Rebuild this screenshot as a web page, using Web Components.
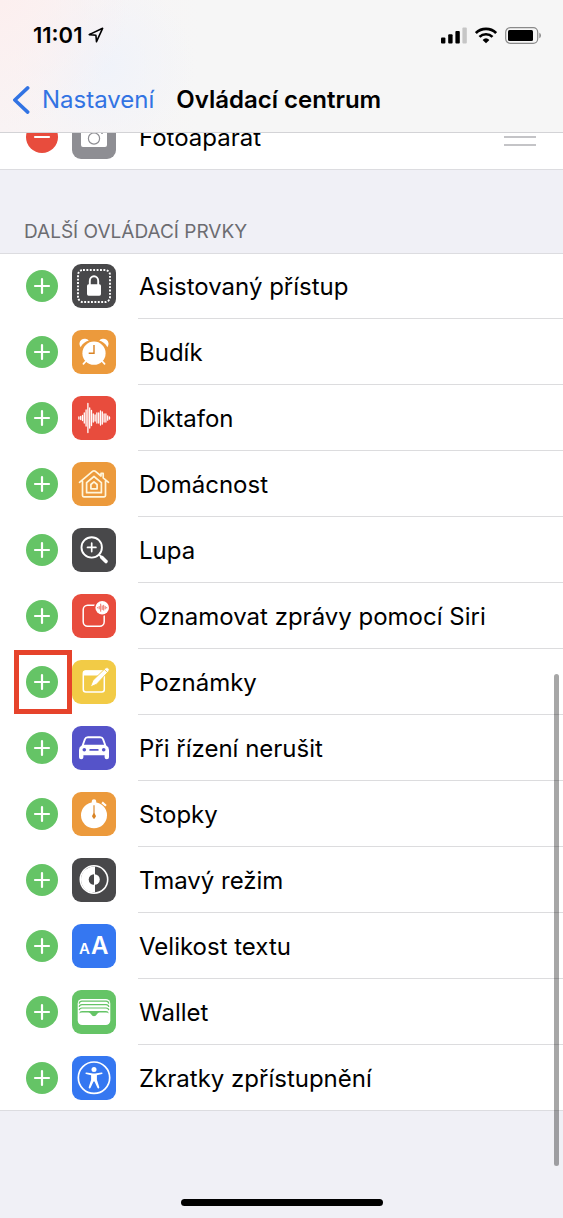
<!DOCTYPE html>
<html lang="cs">
<head>
<meta charset="utf-8">
<meta name="viewport" content="width=device-width, initial-scale=1">
<title>Ovládací centrum</title>
<style>
html { background: #f0f0f6; }
body { margin: 0; font-family: Inter, "Liberation Sans", sans-serif; color: #000; }
</style>
</head>
<body>
<settings-page>
  <nav-header slot="header" heading="Ovládací centrum" back="Nastavení"></nav-header>
  <control-list>
    <control-row action="remove" icon="camera">Fotoaparát</control-row>
  </control-list>
  <control-list heading="Další ovládací prvky">
    <control-row icon="lock">Asistovaný přístup</control-row>
    <control-row icon="alarm">Budík</control-row>
    <control-row icon="wave">Diktafon</control-row>
    <control-row icon="home">Domácnost</control-row>
    <control-row icon="magnifier">Lupa</control-row>
    <control-row icon="announce">Oznamovat zprávy pomocí Siri</control-row>
    <control-row icon="notes" marked>Poznámky</control-row>
    <control-row icon="car">Při řízení nerušit</control-row>
    <control-row icon="stopwatch">Stopky</control-row>
    <control-row icon="dark">Tmavý režim</control-row>
    <control-row icon="textsize">Velikost textu</control-row>
    <control-row icon="wallet">Wallet</control-row>
    <control-row icon="access">Zkratky zpřístupnění</control-row>
  </control-list>
</settings-page>

<script>
const bars = (list, step, x0, cy) => list.map((h, i) => `M${x0 + i * step} ${cy - h}V${cy + h}`).join('');

const ICONS = {
  camera: ['#8e8e93', `<path d="M9 14q0-2 2-2h5l2-3h8l2 3h5q2 0 2 2v16q0 2-2 2H11q-2 0-2-2z" fill="#fff"/><circle cx="22" cy="23.5" r="5.6" fill="none" stroke="#8e8e93" stroke-width="1.2"/><circle cx="30" cy="18" r="1" fill="#8e8e93"/>`],
  lock: ['#48484a', `<rect x="6" y="6" width="32" height="32" rx="5" fill="none" stroke="#fff" stroke-width="1.9" stroke-dasharray="1.9 1.5"/><rect x="15" y="20.3" width="14" height="11.4" rx="1.6" fill="#fff"/><path d="M17.8 21v-4a4.2 4.7 0 0 1 8.4 0v4" fill="none" stroke="#fff" stroke-width="1.9"/>`],
  alarm: ['#ec9a3c', `<g fill="#fff"><circle cx="22" cy="23.2" r="11.6"/><path d="M8.6 17.2a5.2 5.2 0 0 1 8.2-6.6q-5.4 1.7-8.2 6.6z"/><path d="M35.4 17.2a5.2 5.2 0 0 0-8.2-6.6q5.4 1.7 8.2 6.6z"/></g><path d="M14 31l-2.6 2.8M30 31l2.6 2.8" stroke="#fff" stroke-width="1.7" stroke-linecap="round"/><path d="M22 15v8.3h-5.3" fill="none" stroke="#d98324" stroke-width="1.4"/>`],
  wave: ['#e84c3d', `<path d="${bars([1,1.6,2.6,5,8,14.5,10,7.5,4,3,5,5,7,6,4,4,2.2,1], 1.8, 6.9, 22)}" stroke="#fff" stroke-width="1.3" stroke-linecap="round"/>`],
  home: ['#ec9a3c', `<g fill="none" stroke="#fff6dc" stroke-width="1.7" stroke-linejoin="round" stroke-linecap="round"><path d="M10.5 19.2V33.6q0 1.3 1.3 1.3h20.400q1.300 0 1.300-1.300V19.200M7.500 20.300L20.800 9.200q1.200-.9 2.400 0L29 14v-2.600h2.200v4.500l5.300 4.400"/><path d="M14.600 20.600L22 14.500l7.400 6.100v10.100H14.600z"/><path d="M18.900 22.500l3.100-2.700 3.100 2.700v4.300h-6.200z"/></g>`],
  magnifier: ['#48484a', `<g stroke="#fff" fill="none" stroke-linecap="round"><circle cx="19.7" cy="19.4" r="10.2" stroke-width="1.9"/><path d="M15.500 19.400h8.400M19.700 15.200v8.400" stroke-width="1.700"/><path d="M27 26.700l3 3" stroke-width="1.900"/><path d="M29.700 29.300l4.300 4.300" stroke-width="3.600"/></g>`],
  announce: ['#e84c3d', `<rect x="11.200" y="11.300" width="21" height="21" rx="4.500" fill="none" stroke="#fff" stroke-width="1.500"/><circle cx="30.200" cy="13.700" r="8.200" fill="#e84c3d"/><circle cx="30.200" cy="13.700" r="6.800" fill="#fff"/><path d="${bars([.6,1.6,4,2.2,2.8,1.6,.6], 1.5, 25.7, 13.7)}" stroke="#e84c3d" stroke-width=".8"/>`],
  notes: ['#f2cb46', `<rect x="11.300" y="11" width="21" height="21" rx="2.500" fill="none" stroke="#fff" stroke-width="1.500"/><path d="M11 15.500V13q0-2.500 2.500-2.500H30q1.500 0 2.200 1l-4 4z" fill="#fff"/><path d="M18.300 27l2.600-6.600L33.600 8.100q1.400-1.200 2.900.2t.2 2.900L24.600 24.200z" fill="#fff" stroke="#f2cb46" stroke-width=".9"/><path d="M32.200 9.300l3.400 3.400" stroke="#f2cb46" stroke-width=".9"/>`],
  car: ['#5553c9', `<path fill-rule="evenodd" fill="#fff" d="M16 10.300H28q3 0 4 2.700l2.300 6.400q2.700 1.400 2.700 4.600v7.300q0 2-2.200 2t-2.200-2V29.300H11.400v2q0 2-2.200 2t-2.200-2V24q0-3.200 2.700-4.600L12 13q1-2.700 4-2.700zM15.600 12.300q-1.400 0-1.900 1.400l-1.800 5.100h20.200l-1.800-5.100q-.5-1.400-1.900-1.400z"/><g fill="#5553c9"><circle cx="12.300" cy="23.700" r="1.800"/><circle cx="31.700" cy="23.700" r="1.800"/><rect x="17.300" y="23" width="9.400" height="1.800" rx=".9"/></g>`],
  stopwatch: ['#ec9a3c', `<g fill="#fff"><circle cx="22" cy="23.300" r="13"/><path d="M19.800 9q0-1.700 2.200-1.700T24.200 9v3h-4.400z"/><path d="M30.800 9.600l3.900 3.400-1.400 1.600-3.900-3.400z"/></g><path d="M22 13.300v10" stroke="#d98324" stroke-width="1.100"/><path d="M22 20.700l1.500 2.200a1.900 1.900 0 1 1-3 0z" fill="#d98324"/><path d="M22 25v2" stroke="#d98324" stroke-width="1"/>`],
  dark: ['#48484a', `<circle cx="22" cy="21.500" r="13.700" fill="none" stroke="#fff" stroke-width="1.600"/><path d="M22 9.500a12 12 0 0 0 0 24z" fill="#fff" stroke="#fff" stroke-width="2"/><path d="M22.500 16.200a5.300 5.300 0 0 1 0 10.600z" fill="#fff"/><path d="M22 16.200a5.300 5.300 0 0 0 0 10.600z" fill="#48484a"/>`],
  textsize: ['#3577f1', `<text x="7" y="30" font-size="15" font-weight="600" fill="#fff">A</text><text x="19" y="30" font-size="24" font-weight="600" fill="#fff">A</text>`],
  wallet: ['#65c466', `<rect x="5.700" y="9" width="32.600" height="26" rx="4.500" fill="#fff"/><g fill="none" stroke="#65c466" stroke-width="1.200"><path d="M7.200 13.600q.3-2.400 2.800-2.400H34q2.500 0 2.800 2.400"/><path d="M7.200 16.900q.3-2.200 2.800-2.200H34q2.500 0 2.800 2.200"/><path d="M7.200 20.200q.3-2.200 2.800-2.200H34q2.500 0 2.800 2.200"/></g><path d="M7.200 23.400q.3-2.400 2.800-2.400H34q2.500 0 2.800 2.400-.8-.8-2.800-.8H27.500q-1.700 0-2.600 1.700Q23.800 26.200 22 26.200t-2.900-1.900q-.9-1.700-2.600-1.700H10q-2 0-2.800.8z" fill="#65c466"/>`],
  access: ['#3577f1', `<circle cx="22" cy="21.700" r="15.700" fill="none" stroke="#fff" stroke-width="1.700"/><circle cx="22" cy="13.400" r="2.500" fill="#fff"/><path d="M14.300 16.400l5.200.9q2.500.4 5 0l5.200-.9q.8 0 .9.700t-.6.900l-5.100 1.300v4.500l2.400 7.500q.1.900-.7 1.100t-1.200-.6L22.500 25.500h-1l-2.900 6.300q-.4.800-1.200.6t-.7-1.100l2.400-7.500V19.300L14 18q-.7-.2-.6-.9t.9-.7z" fill="#fff"/>`]
};

customElements.define('app-icon', class extends HTMLElement {
  connectedCallback() {
    const [color, art] = ICONS[this.getAttribute('name')];
    this.attachShadow({ mode: 'open' }).innerHTML = `
      <style>
        :host { display: block; width: 44px; height: 44px; border-radius: 9px; background: ${color}; }
        svg { display: block; width: 100%; height: 100%; }
      </style>
      <svg viewBox="0 0 44 44" aria-hidden="true">${art}</svg>`;
  }
});

customElements.define('control-row', class extends HTMLElement {
  connectedCallback() {
    const remove = this.getAttribute('action') === 'remove';
    this.setAttribute('role', 'listitem');
    this.attachShadow({ mode: 'open' }).innerHTML = `
      <style>
        :host { display: flex; align-items: center; height: 66px; padding-left: 26px; box-sizing: border-box; }
        button { position: relative; flex: none; width: 32px; height: 32px; padding: 0; border: 0; border-radius: 50%; background: #65c466; margin-right: 14px; }
        button.remove { background: #e84c3d; }
        button svg { display: block; width: 32px; height: 32px; }
        :host([marked]) button::after { content: ""; position: absolute; inset: -16px -14px -16px -12px; border: 5px solid #e6432b; z-index: 1; }
        app-icon { flex: none; margin-right: 22px; }
        .body { flex: 1; min-width: 0; align-self: stretch; display: flex; align-items: center; justify-content: space-between; box-sizing: border-box; border-bottom: 1px solid #dcdcde; padding: 1px 27px 0 1px; }
        :host(:last-child) .body { border-bottom-color: transparent; }
        label { font-size: 24px; line-height: 32px; padding-top: 1px; white-space: nowrap; }
        .grip { width: 32px; height: 18px; fill: #c4c4c7; }
      </style>
      <button id="toggle" type="button" class="${remove ? 'remove' : 'add'}">
        <svg viewBox="0 0 32 32" aria-hidden="true"><path d="M9 16h14${remove ? '' : 'M16 9v14'}" stroke="#fff" stroke-width="2.2" stroke-linecap="round"/></svg>
      </button>
      <app-icon name="${this.getAttribute('icon')}"></app-icon>
      <div class="body">
        <label for="toggle"><slot></slot></label>
        ${remove ? '<svg class="grip" viewBox="0 0 32 18" aria-hidden="true"><path d="M0 0h32v2H0zM0 8h32v2H0zM0 16h32v2H0z"/></svg>' : ''}
      </div>`;
  }
});

customElements.define('control-list', class extends HTMLElement {
  connectedCallback() {
    const heading = this.getAttribute('heading');
    this.attachShadow({ mode: 'open' }).innerHTML = `
      <style>
        :host { display: block; }
        h2 { margin: 0; padding: 48px 24px 7px; font-size: 19px; line-height: 28px; font-weight: 400; color: #6c6c71; text-transform: uppercase; }
        .rows { background: #fff; box-shadow: inset 0 1px #dcdce0, inset 0 -1px #dcdce0; }
      </style>
      ${heading ? `<h2>${heading}</h2>` : ''}
      <div class="rows" role="list"><slot></slot></div>`;
  }
});

customElements.define('status-bar', class extends HTMLElement {
  connectedCallback() {
    this.attachShadow({ mode: 'open' }).innerHTML = `
      <style>
        :host { display: flex; align-items: center; justify-content: space-between; height: 66px; padding: 4px 21px 0 33px; box-sizing: border-box; }
        div { display: flex; align-items: center; }
        .clock { gap: 6px; }
        .state { gap: 8px; }
        time { font-size: 22px; line-height: 28px; font-weight: 600; }
        svg { display: block; }
      </style>
      <div class="clock"><time>11:01</time>
        <svg width="16" height="16" viewBox="0 0 16 16" aria-hidden="true"><path d="M1.200 7.600L14.600 1.300 8.500 14.700 7.900 8.200z" fill="none" stroke="#000" stroke-width="1.600" stroke-linejoin="round"/></svg>
      </div>
      <div class="state">
        <svg width="26" height="17" viewBox="0 0 26 17" aria-hidden="true"><rect x="0" y="10.500" width="4.400" height="6" rx="1"/><rect x="7.200" y="7.300" width="4.400" height="9.200" rx="1"/><rect x="14.400" y="4" width="4.400" height="12.500" rx="1"/><rect x="21.400" y=".5" width="4.400" height="16" rx="1" fill="#c6c6c6"/></svg>
        <svg width="22" height="17" viewBox="0 0 22 17" aria-hidden="true"><g fill="none" stroke="#000" stroke-width="2.700"><path d="M.9 6.100a14.400 14.400 0 0 1 20.200 0"/><path d="M4.500 9.900a9.300 9.300 0 0 1 13 0"/></g><path d="M7.600 12.900a5 5 0 0 1 6.800 0L11 16.300z"/></svg>
        <svg width="37" height="17" viewBox="0 0 37 17" aria-hidden="true"><rect x=".7" y=".7" width="32" height="15.600" rx="4.500" fill="none" stroke="#8a8a8a" stroke-width="1.200"/><rect x="3" y="3" width="25" height="11" rx="1.500"/><path d="M34.300 5.800q1.700.7 1.700 2.700t-1.700 2.700z" fill="#8a8a8a"/></svg>
      </div>`;
  }
});

customElements.define('nav-header', class extends HTMLElement {
  connectedCallback() {
    this.attachShadow({ mode: 'open' }).innerHTML = `
      <style>
        :host { display: block; border-bottom: 1px solid #d3d3d6;
          background: radial-gradient(circle at 0 0, #fcefef 0, #fcefef00 130px), radial-gradient(circle at 105px 66px, #f0f3fa 0, #f0f3fa00 90px), linear-gradient(90deg, #f9f3f4, #f6f6f6 200px); }
        nav { display: grid; grid-template-columns: auto 1fr; align-items: center; height: 66px; padding-left: 12px; column-gap: 22px; }
        a { display: flex; align-items: center; gap: 12px; color: #3273e3; text-decoration: none; font-size: 24px; line-height: 32px; padding-top: 1px; }
        svg { display: block; }
        h1 { margin: 0; font-size: 24px; line-height: 32px; font-weight: 600; padding-top: 1px; }
      </style>
      <status-bar></status-bar>
      <nav>
        <a href="#"><svg width="18" height="28" viewBox="0 0 18 28" aria-hidden="true"><path d="M15.700 1.900L2.800 14l12.900 12.100" fill="none" stroke="#3273e3" stroke-width="3.500" stroke-linecap="round" stroke-linejoin="round"/></svg>${this.getAttribute('back')}</a>
        <h1>${this.getAttribute('heading')}</h1>
      </nav>`;
  }
});

customElements.define('settings-page', class extends HTMLElement {
  connectedCallback() {
    this.attachShadow({ mode: 'open' }).innerHTML = `
      <style>
        :host { display: block; min-height: 100vh; background: #f0f0f6; }
        header { position: sticky; top: 0; z-index: 2; }
        main { margin-top: -29px; padding-bottom: 40px; }
        .scroll { position: fixed; z-index: 3; right: 4px; bottom: 52px; width: 5px; height: 492px; border-radius: 3px; background: #00000058; }
        .home { position: fixed; z-index: 3; left: 0; right: 0; bottom: 12px; width: 202px; height: 7px; margin: 0 auto; border-radius: 4px; background: #000; }
      </style>
      <header><slot name="header"></slot></header>
      <main><slot></slot></main>
      <div class="scroll"></div>
      <div class="home"></div>`;
  }
});
</script>
</body>
</html>
